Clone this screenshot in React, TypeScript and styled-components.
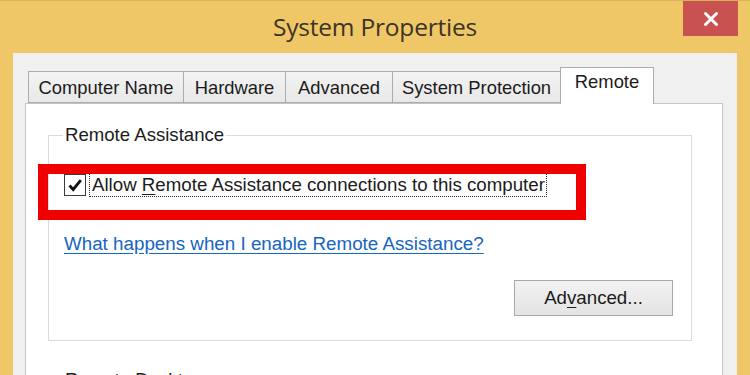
import React from "react";
import styled, { createGlobalStyle } from "styled-components";

const Global = createGlobalStyle`
  html, body { margin: 0; padding: 0; }
  body {
    width: 750px;
    height: 375px;
    overflow: hidden;
    background: #efc767;
    font-family: "Liberation Sans", Arial, sans-serif;
  }
`;

const Window = styled.div`
  position: relative;
  width: 750px;
  height: 375px;
  overflow: hidden;
  display: flex;
  flex-direction: column;
  background: #efc767;
  border-top: 1px solid #d9b25a;
  box-sizing: border-box;
`;

const TitleBar = styled.div`
  height: 52px;
  flex: none;
  display: grid;
  grid-template-columns: 1fr auto 1fr;
  align-items: start;
`;

const Title = styled.div`
  grid-column: 2;
  margin-top: 9px;
  font-family: "Open Sans", "Noto Sans", sans-serif;
  font-size: 24.5px;
  line-height: 34px;
  color: #3b3427;
  letter-spacing: -0.2px;
`;

const CloseButton = styled.div`
  grid-column: 3;
  justify-self: end;
  width: 55px;
  height: 35px;
  margin-right: 12px;
  background: #c85250;
  display: flex;
  align-items: center;
  justify-content: center;
`;

const Client = styled.div`
  flex: 1;
  margin: 0 13px;
  background: #f0f0f0;
  padding: 14px 14px 0 12px;
  display: flex;
  flex-direction: column;
`;

const TabStrip = styled.div`
  display: flex;
  align-items: flex-end;
  height: 36px;
  padding-left: 3px;
  position: relative;
  z-index: 1;
`;

const Tab = styled.div<{ $w: number; $active?: boolean }>`
  width: ${(p) => p.$w}px;
  box-sizing: border-box;
  height: ${(p) => (p.$active ? 37 : 32)}px;
  margin-left: -1px;
  margin-bottom: ${(p) => (p.$active ? -1 : 0)}px;
  border: 1px solid #acacac;
  border-bottom: ${(p) => (p.$active ? "none" : "1px solid #acacac")};
  background: ${(p) => (p.$active ? "#ffffff" : "linear-gradient(#f3f3f3, #e8e8e8)")};
  display: flex;
  justify-content: center;
  padding-top: ${(p) => (p.$active ? 3 : 5)}px;
  font-size: 18.4px;
  line-height: 22px;
  color: #1b1b1b;
  &:first-child { margin-left: 0; }
`;

const Panel = styled.div`
  flex: 1;
  background: #ffffff;
  border: 1px solid #c4c4c4;
  border-bottom: none;
  padding: 31px 30px 0 22px;
  display: flex;
  flex-direction: column;
`;

const Group = styled.div<{ $height?: number; $top?: number }>`
  border: 1px solid #dcdcdc;
  height: ${(p) => (p.$height ? `${p.$height}px` : "auto")};
  margin-top: ${(p) => p.$top ?? 0}px;
  box-sizing: border-box;
  display: flex;
  flex-direction: column;
  flex: none;
`;

const Legend = styled.div`
  align-self: flex-start;
  margin: -12px 0 0 14px;
  padding: 0 2px;
  background: #ffffff;
  font-size: 18.6px;
  line-height: 22px;
  color: #1b1b1b;
`;

const CheckRow = styled.div`
  display: flex;
  align-items: center;
  margin: 26px 0 0 15px;
  gap: 3px;
`;

const Box = styled.div`
  width: 22px;
  height: 22px;
  box-sizing: border-box;
  border: 1px solid #3a3a3a;
  background: #ffffff;
  display: flex;
  align-items: center;
  justify-content: center;
`;

const CheckLabel = styled.div`
  font-size: 18.7px;
  line-height: 22px;
  color: #1b1b1b;
  padding: 1px 1px 0 2px;
  border: 1px dotted #2a2a2a;
`;

const Accel = styled.span`
  text-decoration: underline;
  text-underline-offset: 3px;
`;

const Link = styled.a`
  margin: 36px 0 0 15px;
  align-self: flex-start;
  font-size: 18.8px;
  line-height: 22px;
  color: #1665c0;
  text-decoration: underline;
  text-underline-offset: 3px;
`;

const ButtonRow = styled.div`
  display: flex;
  justify-content: flex-end;
  margin: 25px 18px 0 0;
`;

const Button = styled.div`
  width: 159px;
  height: 36px;
  box-sizing: border-box;
  border: 1px solid #a8a8a8;
  background: linear-gradient(#f2f2f2, #e4e4e4);
  display: flex;
  align-items: center;
  justify-content: center;
  font-size: 18.7px;
  color: #1b1b1b;
`;

const Highlight = styled.div`
  position: absolute;
  left: 38px;
  top: 163px;
  width: 548px;
  height: 56px;
  box-sizing: border-box;
  border: 10px solid #ee0000;
  pointer-events: none;
`;

const tabs = [
  { label: "Computer Name", w: 156 },
  { label: "Hardware", w: 103 },
  { label: "Advanced", w: 108 },
  { label: "System Protection", w: 169 },
  { label: "Remote", w: 94, active: true },
];

export default function App() {
  return (
    <>
      <Global />
      <Window>
        <TitleBar>
          <Title>System Properties</Title>
          <CloseButton>
            <svg width="16" height="16" viewBox="0 0 16 16">
              <path d="M2.5 2.5 L13.5 13.5 M13.5 2.5 L2.5 13.5" stroke="#ffffff" strokeWidth="3" strokeLinecap="round" />
            </svg>
          </CloseButton>
        </TitleBar>
        <Client>
          <TabStrip>
            {tabs.map((t) => (
              <Tab key={t.label} $w={t.w} $active={t.active}>
                {t.label}
              </Tab>
            ))}
          </TabStrip>
          <Panel>
            <Group $height={206}>
              <Legend>Remote Assistance</Legend>
              <CheckRow>
                <Box>
                  <svg width="16" height="16" viewBox="0 0 16 16">
                    <path d="M2.5 8.5 L6.2 12.5 L13.8 3.2" fill="none" stroke="#111" strokeWidth="2.8" strokeLinejoin="miter" />
                  </svg>
                </Box>
                <CheckLabel>
                  Allow <Accel>R</Accel>emote Assistance connections to this computer
                </CheckLabel>
              </CheckRow>
              <Link>What happens when I enable Remote Assistance?</Link>
              <ButtonRow>
                <Button>
                  Ad<Accel>v</Accel>anced...
                </Button>
              </ButtonRow>
            </Group>
            <Group $top={39} $height={60}>
              <Legend>Remote Desktop</Legend>
            </Group>
          </Panel>
        </Client>
        <Highlight />
      </Window>
    </>
  );
}
